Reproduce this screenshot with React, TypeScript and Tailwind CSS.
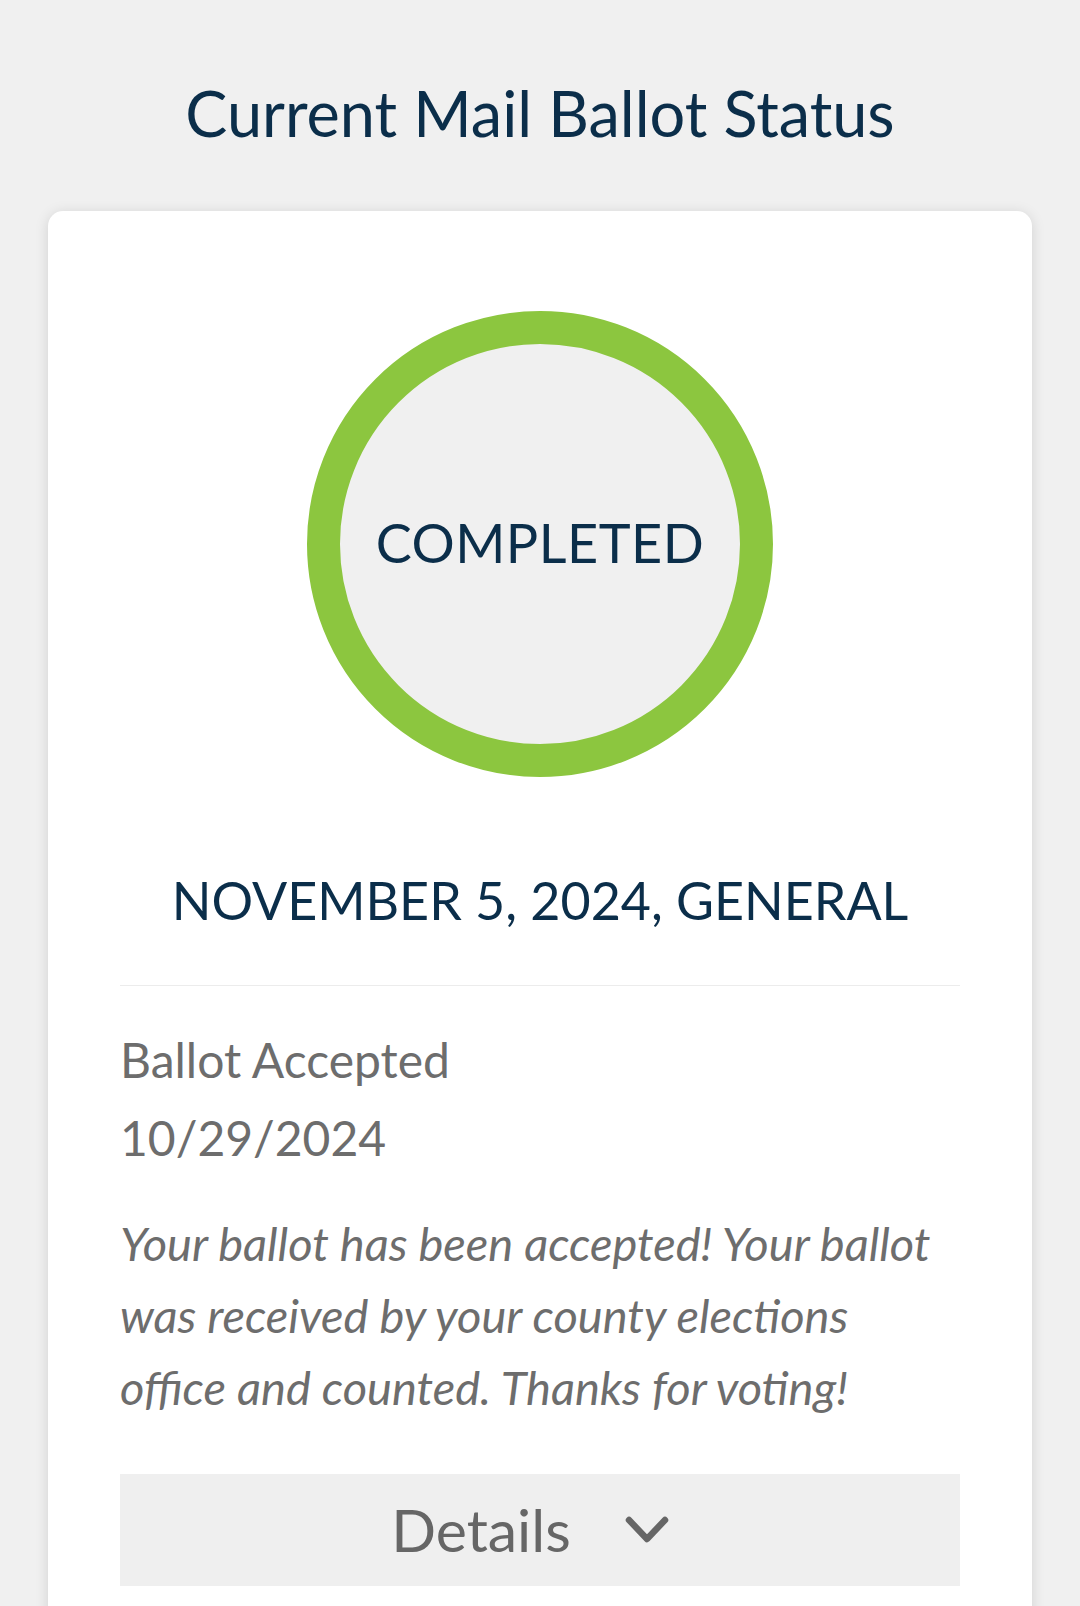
const lato = { fontFamily: "Lato, 'Open Sans', sans-serif" };

function StatusRing({ label }: { label: string }) {
  return (
    <div className="flex justify-center">
      <div className="w-[466px] h-[466px] rounded-full border-[33px] border-[#8cc63f] bg-[#f0f0f0] flex items-center justify-center">
        <span className="text-[54px] leading-[1.2] tracking-[0.5px] text-[#0b2e4a]">{label}</span>
      </div>
    </div>
  );
}

function Chevron() {
  return (
    <svg width="44" height="30" viewBox="0 0 44 30" className="text-[#666666]">
      <polyline
        points="4,5 22,24 40,5"
        fill="none"
        stroke="currentColor"
        strokeWidth="6.5"
        strokeLinecap="round"
        strokeLinejoin="round"
      />
    </svg>
  );
}

export default function App() {
  return (
    <div className="min-h-screen bg-[#f0f0f0] pt-[75px]" style={lato}>
      <h1 className="text-center text-[63px] leading-[1.2] text-[#0b2e4a] font-normal">
        Current Mail Ballot Status
      </h1>

      <div className="mx-[48px] mt-[60px] bg-white rounded-[15px] shadow-[0_2px_14px_rgba(0,0,0,0.13)] px-[72px] pt-[100px] pb-[80px]">
        <StatusRing label="COMPLETED" />

        <p className="mt-[92px] text-center text-[52px] leading-[1.2] text-[#0b2e4a]">
          NOVEMBER 5, 2024, GENERAL
        </p>

        <div className="mt-[54px] h-px bg-[#ececec]" />

        <div className="mt-[35px] text-[48px] leading-[78px] text-[#6d6d6d]">
          <p>Ballot Accepted</p>
          <p>10/29/2024</p>
        </div>

        <p className="mt-[30px] text-[47px] leading-[72px] italic text-[#6d6d6d]">
          Your ballot has been accepted! Your ballot was received by your county
          elections office and counted. Thanks for voting!
        </p>

        <button className="mt-[51px] w-full h-[112px] bg-[#efefef] flex items-center justify-center gap-[54px] pr-[20px] text-[#666666]">
          <span className="text-[59px] leading-[1.2]">Details</span>
          <Chevron />
        </button>
      </div>
    </div>
  );
}
